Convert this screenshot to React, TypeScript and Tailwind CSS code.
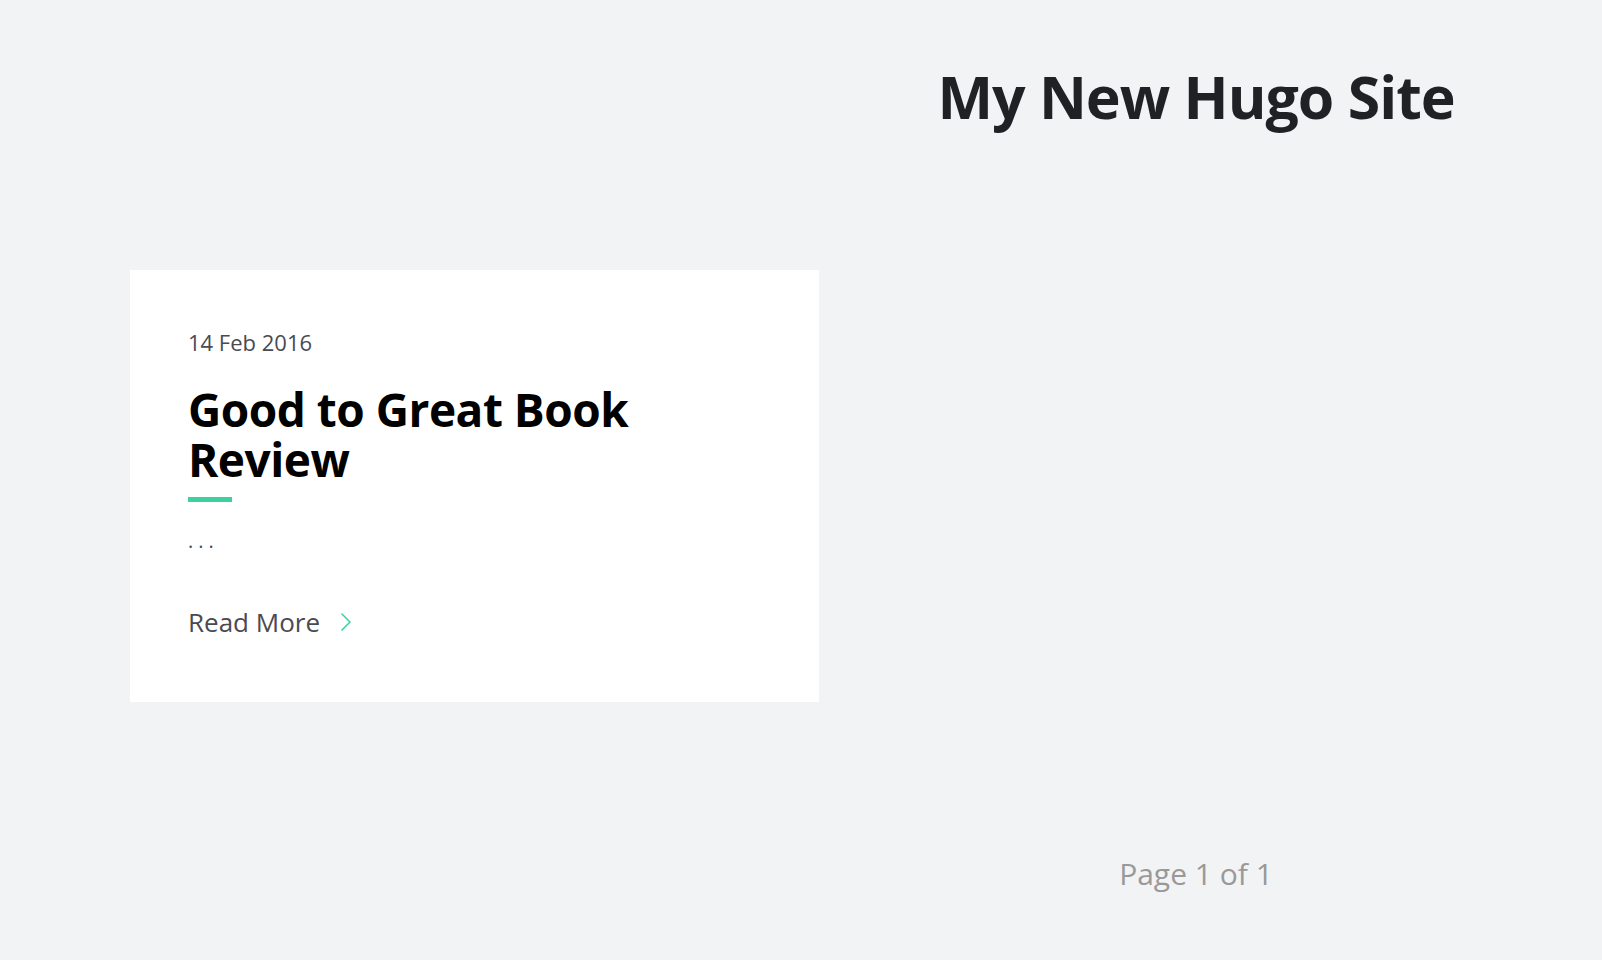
import { ChevronRight } from "lucide-react";

const font = { fontFamily: '"Open Sans", "Noto Sans", sans-serif' };

function PostCard() {
  return (
    <article className="w-[689px] h-[432px] bg-white pl-[58px] pt-[56px]">
      <div className="text-[22px] leading-[32px] text-[#4a4a52]">14 Feb 2016</div>
      <h2 className="mt-[26px] w-[520px] text-[46px] leading-[50px] font-bold text-black tracking-[-0.5px]">
        Good to Great Book Review
      </h2>
      <div className="mt-[13px] h-[5px] w-[44px] bg-[#3ad29f]" />
      <p className="mt-[24px] text-[20px] leading-[30px] text-[#4a4a52] tracking-[5px]">...</p>
      <a className="mt-[48px] flex items-center gap-[10px] text-[26px] leading-[36px] text-[#4a4a52]">
        Read More
        <ChevronRight className="w-[32px] h-[32px] text-[#3ad29f]" strokeWidth={1.2} />
      </a>
    </article>
  );
}

export default function App() {
  return (
    <div className="min-h-screen bg-[#f2f3f5] flex" style={font}>
      <div className="pl-[130px] pt-[270px]">
        <PostCard />
      </div>
      <div className="w-[754px] flex flex-col items-center">
        <h1 className="pt-[56px] text-[59px] leading-[80px] font-bold text-[#1f2125] tracking-[-1px]">
          My New Hugo Site
        </h1>
        <div className="mt-[718px] text-[30px] leading-[40px] text-[#999999]">Page 1 of 1</div>
      </div>
    </div>
  );
}
